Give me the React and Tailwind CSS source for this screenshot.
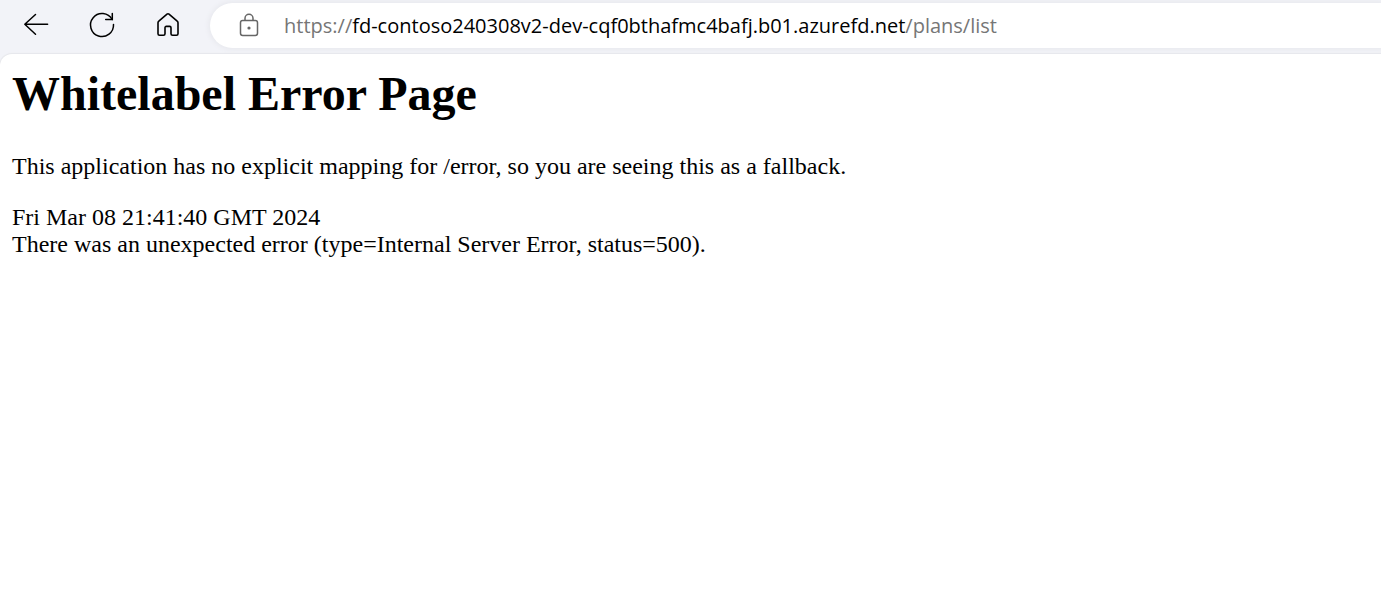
function BackIcon() {
  return (
    <svg width="36" height="36" viewBox="0 0 36 36" fill="none" stroke="currentColor" strokeWidth="1.5" strokeLinecap="round" strokeLinejoin="round" aria-hidden="true">
      <path d="M17.5 8.5 6.8 18.3l10.7 9.9M6.8 18.3h22.8" />
    </svg>
  );
}

function ReloadIcon() {
  return (
    <svg width="36" height="36" viewBox="0 0 36 36" fill="none" stroke="currentColor" strokeWidth="1.5" strokeLinecap="round" strokeLinejoin="round" aria-hidden="true">
      <path d="M29.5 18.4A11.5 11.5 0 1 1 28.1 13.5" />
      <path d="M28.3 7.6v6h-6.6" strokeLinejoin="miter" />
    </svg>
  );
}

function HomeIcon() {
  return (
    <svg width="36" height="36" viewBox="0 0 36 36" fill="none" stroke="currentColor" strokeWidth="1.6" strokeLinecap="round" strokeLinejoin="round" aria-hidden="true">
      <path d="M8 16.8c0-.7.3-1.3.8-1.7L17 8.2a1.6 1.6 0 0 1 2 0l8.2 6.900c.5.4.8 1 .8 1.700v10.900c0 .9-.6 1.500-1.500 1.500h-4c-.9 0-1.500-.6-1.500-1.500v-6c0-.8-.5-1.300-1.300-1.300h-3.400c-.8 0-1.300.5-1.300 1.300v6c0 .9-.6 1.500-1.500 1.500h-4c-.9 0-1.500-.6-1.500-1.500z" />
    </svg>
  );
}

function LockIcon() {
  return (
    <svg width="24" height="28" viewBox="0 0 24 28" fill="none" stroke="currentColor" strokeWidth="1.5" aria-hidden="true">
      <rect x="3.5" y="8.5" width="17" height="15" rx="2.2" />
      <path d="M8 8.500V6.300a4 4 0 0 1 8 0v2.200" />
      <circle cx="12" cy="16" r="1.6" fill="currentColor" stroke="none" />
    </svg>
  );
}

function ToolButton({ label, children }) {
  return (
    <button type="button" aria-label={label} className="flex size-9 items-center justify-center rounded-md hover:bg-black/5">
      {children}
    </button>
  );
}

function Toolbar() {
  return (
    <header className="flex h-[54px] items-start bg-[#f2f3f8] pt-[3px] pl-[18px] text-black">
      <nav aria-label="Browser" className="flex shrink-0 gap-[30px] pt-[3px]">
        <ToolButton label="Back"><BackIcon /></ToolButton>
        <ToolButton label="Refresh"><ReloadIcon /></ToolButton>
        <ToolButton label="Home"><HomeIcon /></ToolButton>
      </nav>
      <div className="ml-6 flex h-[45px] min-w-0 flex-1 items-center rounded-l-full bg-white pl-[27px] shadow-[0_0_4px_2px_#e9eaef]">
        <button type="button" aria-label="View site information" className="shrink-0 text-[#666666]">
          <LockIcon />
        </button>
        <div
          role="textbox"
          aria-label="Address"
          contentEditable
          suppressContentEditableWarning
          spellCheck={false}
          className="ml-[23px] min-w-0 flex-1 overflow-hidden font-['Open_Sans','Noto_Sans',sans-serif] text-[20px] leading-8 whitespace-nowrap text-[#767676] outline-none"
        >
          https://<span className="text-black">fd-contoso240308v2-dev-cqf0bthafmc4bafj.b01.azurefd.net</span>/plans/list
        </div>
      </div>
    </header>
  );
}

export default function App() {
  return (
    <div className="flex min-h-screen flex-col bg-[#f2f3f8]">
      <Toolbar />
      <main className="flex-1 rounded-tl-xl bg-white px-3 pt-[13px] font-['Liberation_Serif',serif] text-[24px] leading-[27px] text-black shadow-[0_0_1px_1px_#e6e7eb]">
        <h1 className="text-[48px] leading-[54px] font-bold">Whitelabel Error Page</h1>
        <p className="mt-8">This application has no explicit mapping for /error, so you are seeing this as a fallback.</p>
        <div className="mt-6">Fri Mar 08 21:41:40 GMT 2024</div>
        <div>There was an unexpected error (type=Internal Server Error, status=500).</div>
      </main>
    </div>
  );
}
